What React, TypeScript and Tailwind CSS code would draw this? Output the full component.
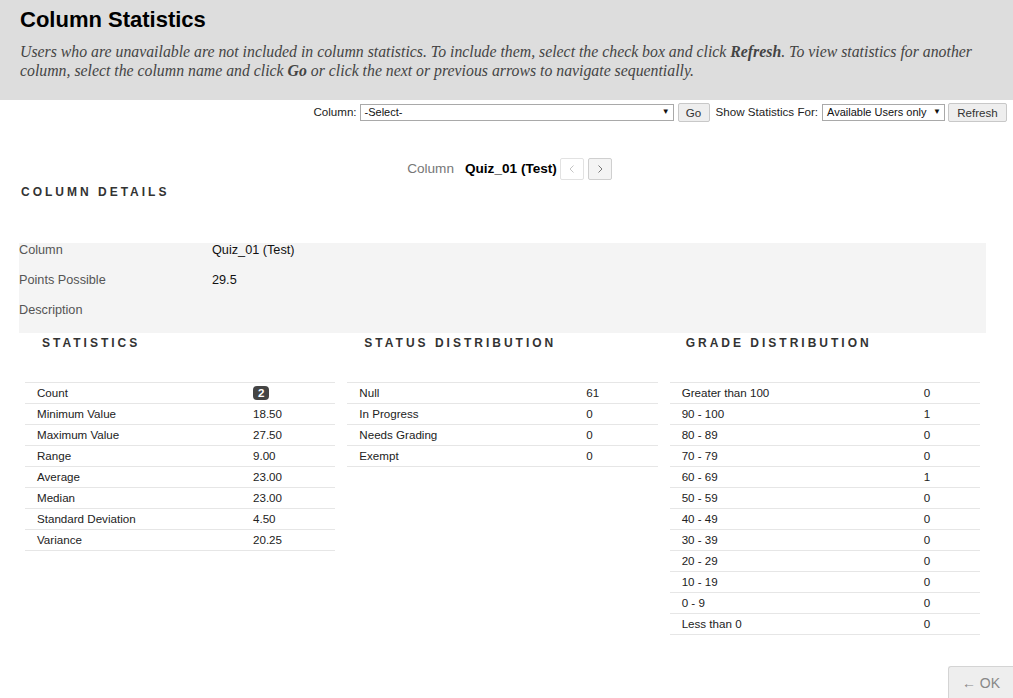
import React from "react";

const sans = { fontFamily: '"Liberation Sans", Arial, sans-serif' };

function Heading({ children, className = "" }: { children: React.ReactNode; className?: string }) {
  return (
    <div className={"text-[12px] font-bold tracking-[3px] text-[#333] leading-[14px] " + className}>{children}</div>
  );
}

type Row = [string, React.ReactNode];

function DataTable({ rows, labelW }: { rows: Row[]; labelW: number }) {
  return (
    <div className="mx-[6px] border-t border-[#e6e6e6]">
      {rows.map(([l, v], i) => (
        <div key={i} className="flex h-[21px] items-center border-b border-[#e6e6e6] text-[11.6px] text-[#222]">
          <div className="pl-[12px] shrink-0" style={{ width: labelW }}>{l}</div>
          <div>{v}</div>
        </div>
      ))}
    </div>
  );
}

export default function App() {
  const stats: Row[] = [
    ["Count", <span className="inline-block rounded-[4px] bg-[#444] px-[5px] text-[11.6px] font-bold leading-[14px] text-white">2</span>],
    ["Minimum Value", "18.50"],
    ["Maximum Value", "27.50"],
    ["Range", "9.00"],
    ["Average", "23.00"],
    ["Median", "23.00"],
    ["Standard Deviation", "4.50"],
    ["Variance", "20.25"],
  ];
  const status: Row[] = [
    ["Null", "61"],
    ["In Progress", "0"],
    ["Needs Grading", "0"],
    ["Exempt", "0"],
  ];
  const grade: Row[] = [
    ["Greater than 100", "0"],
    ["90 - 100", "1"],
    ["80 - 89", "0"],
    ["70 - 79", "0"],
    ["60 - 69", "1"],
    ["50 - 59", "0"],
    ["40 - 49", "0"],
    ["30 - 39", "0"],
    ["20 - 29", "0"],
    ["10 - 19", "0"],
    ["0 - 9", "0"],
    ["Less than 0", "0"],
  ];

  return (
    <div className="min-h-[698px] w-[1013px] bg-white" style={sans}>
      <div className="h-[100px] bg-[#dddddd] pl-[20px] pr-[10px] pt-[6px]">
        <h1 className="text-[22px] font-bold leading-[28px] text-black">Column Statistics</h1>
        <p
          className="mt-[8px] italic leading-[19px] text-[#444]"
          style={{ fontFamily: '"Liberation Serif", "Times New Roman", serif', fontSize: "15.8px" }}
        >
          Users who are unavailable are not included in column statistics. To include them, select the check box and click{" "}
          <b>Refresh</b>. To view statistics for another column, select the column name and click <b>Go</b> or click the next or
          previous arrows to navigate sequentially.
        </p>
      </div>

      <div className="mt-[2px] flex h-[20px] items-center justify-end pr-[6px] text-[11.6px] text-[#222]">
        <span className="mr-[3px]">Column:</span>
        <div className="flex h-[17px] w-[314px] items-center justify-between border border-[#a9a9a9] bg-white pl-[4px] pr-[3px] text-[11px] text-[#111]">
          <span>-Select-</span>
          <span className="text-[8px]">▼</span>
        </div>
        <button className="ml-[4px] h-[19px] w-[32px] rounded-[2px] border border-[#c8c8c8] bg-[#eeeeee] text-[11.6px] text-[#333]">Go</button>
        <span className="ml-[6px] mr-[4px]">Show Statistics For:</span>
        <div className="flex h-[17px] w-[123px] items-center justify-between border border-[#a9a9a9] bg-white pl-[4px] pr-[3px] text-[11px] text-[#111]">
          <span>Available Users only</span>
          <span className="text-[8px]">▼</span>
        </div>
        <button className="ml-[3px] h-[19px] w-[59px] rounded-[2px] border border-[#c8c8c8] bg-[#eeeeee] text-[11.6px] text-[#333]">Refresh</button>
      </div>

      <div className="mt-[36px] flex items-center justify-center pl-[6px]">
        <span className="text-[13.6px] text-[#777]">Column</span>
        <span className="ml-[11px] text-[13.6px] font-bold text-black">Quiz_01 (Test)</span>
        <span className="ml-[3px] flex h-[22px] w-[24px] items-center justify-center rounded-[2px] border border-[#e2e2e2] bg-white text-[#c4c4c4]">
          <svg width="8" height="10" viewBox="0 0 8 10"><path d="M5.5 1.5 L2 5 L5.5 8.5" fill="none" stroke="currentColor" strokeWidth="1" /></svg>
        </span>
        <span className="ml-[4px] flex h-[22px] w-[24px] items-center justify-center rounded-[2px] border border-[#cfcfcf] bg-[#f4f4f4] text-[#777]">
          <svg width="8" height="10" viewBox="0 0 8 10"><path d="M2.5 1.5 L6 5 L2.5 8.5" fill="none" stroke="currentColor" strokeWidth="1" /></svg>
        </span>
      </div>

      <Heading className="ml-[21px] mt-[5px]">COLUMN DETAILS</Heading>

      <div className="ml-[19px] mr-[27px] mt-[44px] bg-[#f4f4f4] text-[12.7px]">
        {[
          ["Column", "Quiz_01 (Test)"],
          ["Points Possible", "29.5"],
          ["Description", ""],
        ].map(([l, v]) => (
          <div key={l} className="flex h-[30px] items-start leading-[15px]">
            <div className="w-[193px] text-[#555]">{l}</div>
            <div className="text-[#111]">{v}</div>
          </div>
        ))}
      </div>

      <div className="ml-[19px] mr-[27px] grid grid-cols-3">
        <div>
          <Heading className="ml-[23px] mt-[3px] h-[46px]">STATISTICS</Heading>
          <DataTable rows={stats} labelW={228} />
        </div>
        <div>
          <Heading className="ml-[23px] mt-[3px] h-[46px]">STATUS DISTRIBUTION</Heading>
          <DataTable rows={status} labelW={239} />
        </div>
        <div>
          <Heading className="ml-[22px] mt-[3px] h-[46px]">GRADE DISTRIBUTION</Heading>
          <DataTable rows={grade} labelW={254} />
        </div>
      </div>

      <div className="mt-[31px] flex justify-end">
        <div className="flex h-[33px] w-[65px] items-center justify-center rounded-tl-[3px] border-l border-t border-[#d4d4d4] bg-[#eeeeee] text-[14px] text-[#888]">
          ← OK
        </div>
      </div>
    </div>
  );
}
